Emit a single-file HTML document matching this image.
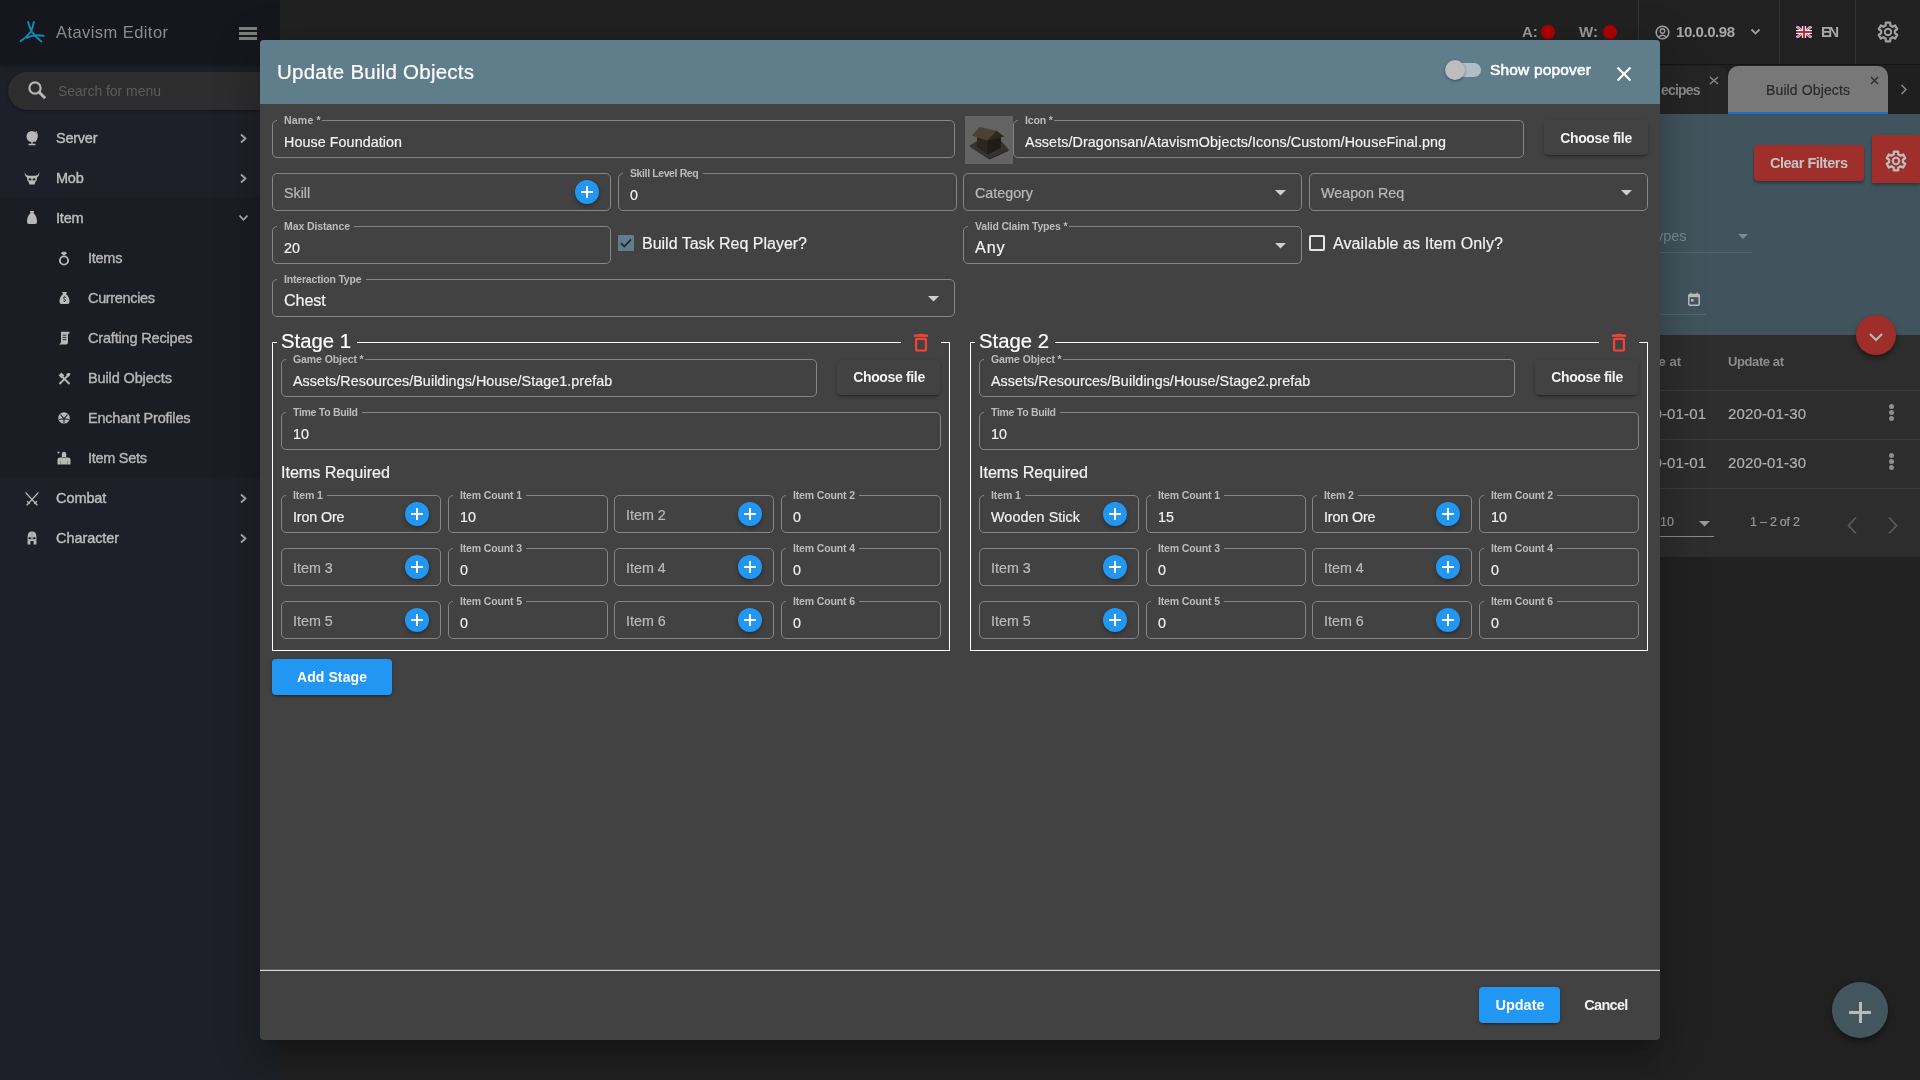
<!DOCTYPE html><html><head><meta charset="utf-8"><title>Update Build Objects</title><style>*{margin:0;padding:0}html,body{width:1920px;height:1080px;overflow:hidden;background:#1c1c1c}
.a{position:absolute;display:block}.t{position:absolute;white-space:nowrap;line-height:1;font-family:"Liberation Sans",sans-serif;will-change:transform}</style></head><body>
<div class="a" style="left:0px;top:0px;width:280px;height:1080px;background:#1e2029"></div>
<div class="a" style="left:0px;top:198px;width:280px;height:280px;background:#1b1d24"></div>
<div class="a" style="left:0px;top:0px;width:280px;height:64px;background:#16171c;box-shadow:0 2px 5px rgba(0,0,0,.3)"></div>
<svg class="a" style="left:18px;top:18px;" width="30" height="28" viewBox="0 0 30 28"><g fill="none" stroke="#0d8bbd" stroke-width="1.9" stroke-linecap="round"><path d="M10.1 4 Q12 11 14 14 Q18 19.5 23.4 23.4"/><path d="M15.9 4 Q14.5 10 13 13.5 Q8 20 2.6 23.1"/><path d="M8.5 19.8 Q16 16.2 25.6 17.8"/></g></svg>
<div class="t" style="top:24.03px;font-size:16.5px;color:#8c8c8c;font-weight:400;letter-spacing:0.433px;left:56.0px;">Atavism Editor</div>
<div class="a" style="left:238.7px;top:27.2px;width:18.5px;height:2.5px;background:#7f7f7f"></div>
<div class="a" style="left:238.7px;top:32.2px;width:18.5px;height:2.5px;background:#7f7f7f"></div>
<div class="a" style="left:238.7px;top:37.4px;width:18.5px;height:2.5px;background:#7f7f7f"></div>
<div class="a" style="left:8px;top:72px;width:290px;height:38px;background:#2d2d2d;border-radius:19px;box-shadow:0 1px 3px rgba(0,0,0,.35)"></div>
<svg class="a" style="left:27px;top:80px;" width="20" height="20" viewBox="0 0 20 20"><circle cx="8" cy="8" r="5.6" fill="none" stroke="#b5b5b5" stroke-width="2.2"/><path d="M12 12 L18.2 18.2" stroke="#b8b8b8" stroke-width="3"/></svg>
<div class="t" style="top:83.95px;font-size:14px;color:#5c5c5c;font-weight:400;letter-spacing:-0.036px;left:58.0px;">Search for menu</div>
<div class="t" style="top:130.53px;font-size:14.5px;color:#bdbdbd;font-weight:400;letter-spacing:-0.244px;left:56.0px;-webkit-text-stroke:0.4px #bdbdbd;">Server</div>
<svg class="a" style="left:239px;top:133px;" width="9" height="11" viewBox="0 0 9 11"><path d="M2 1.5 L6.5 5.5 L2 9.5" fill="none" stroke="#b0b0b0" stroke-width="1.8"/></svg>
<div class="t" style="top:170.53px;font-size:14.5px;color:#bdbdbd;font-weight:400;letter-spacing:-0.209px;left:56.0px;-webkit-text-stroke:0.4px #bdbdbd;">Mob</div>
<svg class="a" style="left:239px;top:173px;" width="9" height="11" viewBox="0 0 9 11"><path d="M2 1.5 L6.5 5.5 L2 9.5" fill="none" stroke="#b0b0b0" stroke-width="1.8"/></svg>
<div class="t" style="top:210.53px;font-size:14.5px;color:#bdbdbd;font-weight:400;letter-spacing:-0.168px;left:56.0px;-webkit-text-stroke:0.4px #bdbdbd;">Item</div>
<svg class="a" style="left:238px;top:214px;" width="11" height="8" viewBox="0 0 11 8"><path d="M1.5 1.5 L5.5 5.8 L9.5 1.5" fill="none" stroke="#b0b0b0" stroke-width="1.8"/></svg>
<div class="t" style="top:490.53px;font-size:14.5px;color:#bdbdbd;font-weight:400;letter-spacing:-0.076px;left:56.0px;-webkit-text-stroke:0.4px #bdbdbd;">Combat</div>
<svg class="a" style="left:239px;top:493px;" width="9" height="11" viewBox="0 0 9 11"><path d="M2 1.5 L6.5 5.5 L2 9.5" fill="none" stroke="#b0b0b0" stroke-width="1.8"/></svg>
<div class="t" style="top:530.53px;font-size:14.5px;color:#bdbdbd;font-weight:400;letter-spacing:-0.071px;left:56.0px;-webkit-text-stroke:0.4px #bdbdbd;">Character</div>
<svg class="a" style="left:239px;top:533px;" width="9" height="11" viewBox="0 0 9 11"><path d="M2 1.5 L6.5 5.5 L2 9.5" fill="none" stroke="#b0b0b0" stroke-width="1.8"/></svg>
<div class="t" style="top:250.53px;font-size:14.5px;color:#b5b5b5;font-weight:400;letter-spacing:-0.263px;left:88.0px;-webkit-text-stroke:0.4px #b5b5b5;">Items</div>
<div class="t" style="top:290.53px;font-size:14.5px;color:#b5b5b5;font-weight:400;letter-spacing:-0.345px;left:88.0px;-webkit-text-stroke:0.4px #b5b5b5;">Currencies</div>
<div class="t" style="top:330.53px;font-size:14.5px;color:#b5b5b5;font-weight:400;letter-spacing:-0.173px;left:88.0px;-webkit-text-stroke:0.4px #b5b5b5;">Crafting Recipes</div>
<div class="t" style="top:370.53px;font-size:14.5px;color:#b5b5b5;font-weight:400;letter-spacing:-0.128px;left:88.0px;-webkit-text-stroke:0.4px #b5b5b5;">Build Objects</div>
<div class="t" style="top:410.53px;font-size:14.5px;color:#b5b5b5;font-weight:400;letter-spacing:-0.206px;left:88.0px;-webkit-text-stroke:0.4px #b5b5b5;">Enchant Profiles</div>
<div class="t" style="top:450.53px;font-size:14.5px;color:#b5b5b5;font-weight:400;letter-spacing:-0.281px;left:88.0px;-webkit-text-stroke:0.4px #b5b5b5;">Item Sets</div>
<svg class="a" style="left:25px;top:130px;" width="14" height="16" viewBox="0 0 14 16"><circle cx="7" cy="6.5" r="5.5" fill="#b8b8b8"/><path d="M7 12 V14 M3.5 14.5 H10.5" stroke="#b8b8b8" stroke-width="1.3"/><path d="M11 1 Q14 6 10 12" fill="none" stroke="#b8b8b8" stroke-width="1"/></svg>
<svg class="a" style="left:24px;top:171px;" width="16" height="14" viewBox="0 0 16 14"><path d="M0.8 0.5 Q1.2 4.2 4.5 4.8 L11.5 4.8 Q14.8 4.2 15.2 0.5 Q15.6 5.2 13 6.4 Q13.4 9.6 11.2 11.2 L10.6 13.4 H5.4 L4.8 11.2 Q2.6 9.6 3 6.4 Q0.4 5.2 0.8 0.5Z" fill="#b8b8b8"/><ellipse cx="6" cy="8.4" rx="1.5" ry="1.1" fill="#1e2029"/><ellipse cx="10" cy="8.4" rx="1.5" ry="1.1" fill="#1e2029"/></svg>
<svg class="a" style="left:26px;top:210px;" width="12" height="15" viewBox="0 0 12 15"><path d="M4 1 H8 L7.5 3 Q11 6 11 12 Q11 14 9 14 H3 Q1 14 1 12 Q1 6 4.5 3Z" fill="#b8b8b8"/></svg>
<svg class="a" style="left:24px;top:490px;" width="16" height="17" viewBox="0 0 16 17"><path d="M2 15 L14.5 1.5 L14.2 3.8 L3.2 15.8Z" fill="#b8b8b8"/><path d="M14 15 L1.5 1.5 L1.8 3.8 L12.8 15.8Z" fill="#b8b8b8"/><path d="M3.2 11.2 L5.6 13.8 M12.8 11.2 L10.4 13.8" stroke="#b8b8b8" stroke-width="1.3"/></svg>
<svg class="a" style="left:27px;top:531px;" width="10" height="14" viewBox="0 0 10 14"><path d="M0.6 13.6 V6 Q0.6 0.6 5 0.6 Q9.4 0.6 9.4 6 V13.6 H6.6 V10 H3.4 V13.6Z" fill="#b8b8b8"/><rect x="1.6" y="6.3" width="2.6" height="1.9" fill="#1e2029"/><rect x="5.8" y="6.3" width="2.6" height="1.9" fill="#1e2029"/><rect x="4.6" y="1.5" width="0.8" height="7" fill="#8a8a8a"/></svg>
<svg class="a" style="left:58px;top:251px;" width="12" height="15" viewBox="0 0 12 15"><path d="M4.2 0.8 H7.8 L9 2.4 L6 4.6 L3 2.4Z" fill="#b8b8b8"/><circle cx="6" cy="9.5" r="4.1" fill="none" stroke="#b8b8b8" stroke-width="1.9"/></svg>
<svg class="a" style="left:58.5px;top:291px;" width="11" height="14" viewBox="0 0 11 14"><path d="M3 1 H8 L7 3.2 Q10.5 5.5 10.5 11 Q10.5 13 8.5 13 H2.5 Q0.5 13 0.5 11 Q0.5 5.5 4 3.2Z" fill="#b8b8b8"/><path d="M6.6 6.6 Q5.4 5.8 4.6 6.6 Q4.2 7.6 5.6 8.2 Q7 8.8 6.4 9.8 Q5.6 10.6 4.4 9.8 M5.5 5.4 V6.2 M5.5 10.2 V11" fill="none" stroke="#1b1d24" stroke-width="0.9"/></svg>
<svg class="a" style="left:57.5px;top:331px;" width="12" height="14" viewBox="0 0 12 14"><path d="M3 0.8 H11.4 V2.8 H10 V11.6 Q10 13.4 8.2 13.4 H0.8 Q2.6 12.6 3 11.2Z" fill="#b8b8b8"/><path d="M4.6 4.2 H8.4 M4.6 6.4 H8.4 M4.6 8.6 H8.4" stroke="#1b1d24" stroke-width="0.9"/></svg>
<svg class="a" style="left:57.5px;top:372px;" width="13" height="13" viewBox="0 0 13 13"><path d="M1.5 12 L9.5 3.8 M11.5 12 L4.5 5" stroke="#b8b8b8" stroke-width="1.8"/><path d="M0.6 3.4 L3.4 0.6 L6.4 3.6 L3.6 6.4Z" fill="#b8b8b8"/><path d="M8.2 2.2 Q10.4 0.2 12.6 1.6 Q11.8 4.6 9.6 5.6Z" fill="#b8b8b8"/></svg>
<svg class="a" style="left:58px;top:412px;" width="12" height="12" viewBox="0 0 12 12"><circle cx="6" cy="6" r="5.8" fill="#b8b8b8"/><path d="M2.5 2.5 L6 6.8 L9.5 2.5 M6 6.8 V11.5 M1.2 7.5 L6 6.8 L10.8 7.5" fill="none" stroke="#1b1d24" stroke-width="1.1"/></svg>
<svg class="a" style="left:56px;top:450px;" width="15" height="15" viewBox="0 0 15 15"><circle cx="2.5" cy="2.5" r="1.1" fill="#b8b8b8"/><path d="M5.8 7 V4.2 Q5.8 1.8 8 1.8 Q10.2 1.8 10.2 4.2 V7Z" fill="#b8b8b8"/><path d="M1.5 14.5 V9.5 Q1.5 7.5 4 7.5 H12 Q14.5 7.5 14.5 9.5 V14.5 H11.5 V11 H4.5 V14.5Z" fill="#b8b8b8"/><path d="M4.5 11 V14.5 H11.5 V11Z" fill="#b8b8b8"/></svg>
<div class="a" style="left:280px;top:0px;width:1640px;height:64px;background:#212121"></div>
<div class="a" style="left:280px;top:64px;width:1640px;height:1px;background:#141414"></div>
<div class="a" style="left:1638px;top:0px;width:1px;height:64px;background:#333"></div>
<div class="a" style="left:1779px;top:0px;width:1px;height:64px;background:#333"></div>
<div class="a" style="left:1855px;top:0px;width:1px;height:64px;background:#333"></div>
<div class="t" style="top:24.10px;font-size:15px;color:#9a9a9a;font-weight:700;left:1522.0px;">A:</div>
<div class="a" style="left:1541px;top:25px;width:14px;height:14px;background:#b00000;border-radius:50%"></div>
<div class="t" style="top:24.10px;font-size:15px;color:#9a9a9a;font-weight:700;left:1579.0px;">W:</div>
<div class="a" style="left:1603px;top:25px;width:14px;height:14px;background:#b00000;border-radius:50%"></div>
<svg class="a" style="left:1655px;top:25px;" width="15" height="15" viewBox="0 0 15 15"><circle cx="7.5" cy="7.5" r="6.3" fill="none" stroke="#a0a0a0" stroke-width="1.6"/><circle cx="7.5" cy="6" r="2.2" fill="none" stroke="#a0a0a0" stroke-width="1.4"/><path d="M3.5 12 Q7.5 8.5 11.5 12" fill="none" stroke="#a0a0a0" stroke-width="1.4"/></svg>
<div class="t" style="top:24.10px;font-size:15px;color:#a8a8a8;font-weight:700;letter-spacing:-0.445px;left:1676.0px;">10.0.0.98</div>
<svg class="a" style="left:1750px;top:28px;" width="11" height="8" viewBox="0 0 11 8"><path d="M1.5 1.5 L5.5 5.5 L9.5 1.5" fill="none" stroke="#a0a0a0" stroke-width="1.8"/></svg>
<svg class="a" style="left:1796px;top:26px;" width="16" height="12" viewBox="0 0 16 12"><rect width="16" height="12" fill="#1a237e"/><path d="M0 0 L16 12 M16 0 L0 12" stroke="#fff" stroke-width="2.4"/><path d="M0 0 L16 12 M16 0 L0 12" stroke="#c62828" stroke-width="1"/><path d="M8 0 V12 M0 6 H16" stroke="#fff" stroke-width="4"/><path d="M8 0 V12 M0 6 H16" stroke="#c62828" stroke-width="2.2"/></svg>
<div class="t" style="top:24.10px;font-size:15px;color:#a8a8a8;font-weight:700;letter-spacing:-2.844px;left:1821.0px;">EN</div>
<svg class="a" style="left:1876px;top:19.5px;" width="24" height="24" viewBox="0 0 24 24"><path d="M8.50 5.94 L9.72 5.38 L9.84 2.65 L14.16 2.65 L14.28 5.38 L15.50 5.94 L16.59 6.72 L19.02 5.45 L21.18 9.19 L18.87 10.66 L19.00 12.00 L18.87 13.34 L21.18 14.81 L19.02 18.55 L16.59 17.28 L15.50 18.06 L14.28 18.62 L14.16 21.35 L9.84 21.35 L9.72 18.62 L8.50 18.06 L7.41 17.28 L4.98 18.55 L2.82 14.81 L5.13 13.34 L5.00 12.00 L5.13 10.66 L2.82 9.19 L4.98 5.45 L7.41 6.72Z" fill="none" stroke="#a0a0a0" stroke-width="2.3" stroke-linejoin="round"/><circle cx="12" cy="12" r="3.2" fill="none" stroke="#a0a0a0" stroke-width="2"/></svg>
<div class="a" style="left:280px;top:65px;width:1640px;height:49px;background:#1f1f1f"></div>
<div class="a" style="left:1600px;top:66px;width:128px;height:48px;background:#252525;border-top-right-radius:10px"></div>
<div class="t" style="top:82.85px;font-size:14px;color:#8a8a8a;font-weight:700;letter-spacing:-0.819px;left:1661.0px;">ecipes</div>
<svg class="a" style="left:1709px;top:76px;" width="10" height="9" viewBox="0 0 10 9"><path d="M1 1 L9 8 M9 1 L1 8" stroke="#8a8a8a" stroke-width="1.4"/></svg>
<div class="a" style="left:1728px;top:66px;width:160px;height:48px;background:#787878;border-radius:10px 10px 0 0"></div>
<div class="a" style="left:1728px;top:112px;width:160px;height:2px;background:#1a6fc6"></div>
<div class="t" style="top:82.85px;font-size:14px;color:#2a2a2a;font-weight:400;letter-spacing:0.126px;left:1766.0px;-webkit-text-stroke:0.2px #2a2a2a;">Build Objects</div>
<svg class="a" style="left:1870px;top:76px;" width="9" height="9" viewBox="0 0 9 9"><path d="M1 1 L8 8 M8 1 L1 8" stroke="#2a2a2a" stroke-width="1.3"/></svg>
<svg class="a" style="left:1900px;top:84px;" width="8" height="11" viewBox="0 0 8 11"><path d="M1.5 1 L6 5.5 L1.5 10" fill="none" stroke="#8a8a8a" stroke-width="1.5"/></svg>
<div class="a" style="left:1660px;top:114px;width:260px;height:221px;background:#41535c"></div>
<div class="a" style="left:1754px;top:145px;width:110px;height:36px;background:#9f2f2a;border-radius:4px;box-shadow:0 2px 3px rgba(0,0,0,.35)"></div>
<div class="t" style="top:156.33px;font-size:14.5px;color:#c4c4c4;font-weight:700;letter-spacing:-0.486px;left:1770.0px;">Clear Filters</div>
<div class="a" style="left:1872px;top:135px;width:48px;height:48px;background:#9f2f2a;box-shadow:0 2px 3px rgba(0,0,0,.35)"></div>
<svg class="a" style="left:1884px;top:149.3px;" width="24" height="24" viewBox="0 0 24 24"><path d="M8.50 5.94 L9.72 5.38 L9.84 2.65 L14.16 2.65 L14.28 5.38 L15.50 5.94 L16.59 6.72 L19.02 5.45 L21.18 9.19 L18.87 10.66 L19.00 12.00 L18.87 13.34 L21.18 14.81 L19.02 18.55 L16.59 17.28 L15.50 18.06 L14.28 18.62 L14.16 21.35 L9.84 21.35 L9.72 18.62 L8.50 18.06 L7.41 17.28 L4.98 18.55 L2.82 14.81 L5.13 13.34 L5.00 12.00 L5.13 10.66 L2.82 9.19 L4.98 5.45 L7.41 6.72Z" fill="none" stroke="#bdbdbd" stroke-width="2.3" stroke-linejoin="round"/><circle cx="12" cy="12" r="3.2" fill="none" stroke="#bdbdbd" stroke-width="2"/></svg>
<div class="t" style="top:228.73px;font-size:14.5px;color:#7c8a91;font-weight:400;right:233.5px;">Claim Types</div>
<svg class="a" style="left:1738px;top:234px;" width="10" height="5" viewBox="0 0 10 5"><path d="M0 0 H10 L5 5Z" fill="#7c8a91"/></svg>
<div class="a" style="left:1660px;top:252px;width:92px;height:1px;background:#56666e"></div>
<svg class="a" style="left:1688px;top:292px;" width="12" height="14" viewBox="0 0 12 14"><rect x="0.8" y="2.6" width="10.4" height="10.6" rx="1" fill="none" stroke="#bdbdbd" stroke-width="1.5"/><rect x="0.8" y="2.6" width="10.4" height="2.6" fill="#bdbdbd"/><path d="M3 0.6V3 M9 0.6V3" stroke="#bdbdbd" stroke-width="1.2"/><rect x="3" y="7" width="2.6" height="2.6" fill="#bdbdbd"/></svg>
<div class="a" style="left:1660px;top:314px;width:46px;height:1px;background:#56666e"></div>
<div class="a" style="left:1660px;top:335px;width:260px;height:222px;background:#2d2d2d"></div>
<div class="t" style="top:355.00px;font-size:13px;color:#8d8d8d;font-weight:700;right:239.5px;">ate at</div>
<div class="t" style="top:355.00px;font-size:13px;color:#8d8d8d;font-weight:700;letter-spacing:-0.404px;left:1728.0px;">Update at</div>
<div class="a" style="left:1660px;top:390px;width:260px;height:1px;background:#3b3b3b"></div>
<div class="a" style="left:1660px;top:439px;width:260px;height:1px;background:#3b3b3b"></div>
<div class="a" style="left:1660px;top:488px;width:260px;height:1px;background:#3b3b3b"></div>
<div class="t" style="top:405.90px;font-size:15px;color:#b0b0b0;font-weight:400;letter-spacing:0.141px;right:214.0px;-webkit-text-stroke:0.2px #b0b0b0;">2020-01-01</div>
<div class="t" style="top:405.90px;font-size:15px;color:#b0b0b0;font-weight:400;letter-spacing:0.141px;left:1728.0px;-webkit-text-stroke:0.2px #b0b0b0;">2020-01-30</div>
<div class="a" style="left:1889.4px;top:404.0px;width:5px;height:5px;background:#8e8e8e;border-radius:50%"></div>
<div class="a" style="left:1889.4px;top:410.0px;width:5px;height:5px;background:#8e8e8e;border-radius:50%"></div>
<div class="a" style="left:1889.4px;top:416.0px;width:5px;height:5px;background:#8e8e8e;border-radius:50%"></div>
<div class="t" style="top:454.80px;font-size:15px;color:#b0b0b0;font-weight:400;letter-spacing:0.141px;right:214.0px;-webkit-text-stroke:0.2px #b0b0b0;">2020-01-01</div>
<div class="t" style="top:454.80px;font-size:15px;color:#b0b0b0;font-weight:400;letter-spacing:0.141px;left:1728.0px;-webkit-text-stroke:0.2px #b0b0b0;">2020-01-30</div>
<div class="a" style="left:1889.4px;top:452.9px;width:5px;height:5px;background:#8e8e8e;border-radius:50%"></div>
<div class="a" style="left:1889.4px;top:458.9px;width:5px;height:5px;background:#8e8e8e;border-radius:50%"></div>
<div class="a" style="left:1889.4px;top:464.9px;width:5px;height:5px;background:#8e8e8e;border-radius:50%"></div>
<div class="t" style="top:516.42px;font-size:12.5px;color:#9a9a9a;font-weight:400;left:1660.0px;-webkit-text-stroke:0.2px #9a9a9a;">10</div>
<svg class="a" style="left:1699px;top:521px;" width="12" height="7" viewBox="0 0 12 7"><path d="M0 0 H11 L5.5 5.5Z" fill="#9a9a9a"/></svg>
<div class="a" style="left:1660px;top:536px;width:54px;height:1px;background:#8a8a8a"></div>
<div class="t" style="top:516.42px;font-size:12.5px;color:#9a9a9a;font-weight:400;letter-spacing:-0.236px;left:1750.0px;-webkit-text-stroke:0.2px #9a9a9a;">1 – 2 of 2</div>
<svg class="a" style="left:1846px;top:515.5px;" width="12" height="19" viewBox="0 0 12 19"><path d="M10 1.5 L2.5 9.5 L10 17.5" fill="none" stroke="#5a5a5a" stroke-width="1.8"/></svg>
<svg class="a" style="left:1887px;top:515.5px;" width="12" height="19" viewBox="0 0 12 19"><path d="M2 1.5 L9.5 9.5 L2 17.5" fill="none" stroke="#5a5a5a" stroke-width="1.8"/></svg>
<div class="a" style="left:1660px;top:557px;width:260px;height:523px;background:#212121"></div>
<div class="a" style="left:280px;top:64px;width:1380px;height:1016px;background:#212121"></div>
<div class="a" style="left:1856px;top:315px;width:40px;height:40px;background:#9d2e29;border-radius:50%;box-shadow:0 3px 5px rgba(0,0,0,.4)"></div>
<svg class="a" style="left:1868px;top:331.5px;" width="16" height="10" viewBox="0 0 16 10"><path d="M2 2 L8 8 L14 2" fill="none" stroke="#b8b8b8" stroke-width="2.2"/></svg>
<div class="a" style="left:1832px;top:982px;width:56px;height:56px;background:#43555d;border-radius:50%;box-shadow:0 3px 6px rgba(0,0,0,.45)"></div>
<div class="a" style="left:1849px;top:1011px;width:22px;height:3px;background:#bababa"></div>
<div class="a" style="left:1858.5px;top:1001.5px;width:3px;height:21.5px;background:#bababa"></div>
<div class="a" style="left:260px;top:40px;width:1400px;height:1000px;background:#424242;border-radius:4px;box-shadow:0 11px 15px -7px rgba(0,0,0,.2),0 24px 38px 3px rgba(0,0,0,.14),0 9px 46px 8px rgba(0,0,0,.12)"></div>
<div class="a" style="left:260px;top:40px;width:1400px;height:64px;background:#607d8b;border-radius:4px 4px 0 0"></div>
<div class="t" style="top:62.25px;font-size:20.5px;color:#ffffff;font-weight:400;letter-spacing:0.233px;left:276.5px;-webkit-text-stroke:0.2px #ffffff;">Update Build Objects</div>
<div class="a" style="left:1446px;top:63px;width:35px;height:14px;background:#b0bec5;border-radius:7px"></div>
<div class="a" style="left:1445px;top:60px;width:20px;height:20px;background:#bdbdbd;border-radius:50%;box-shadow:0 1px 3px rgba(0,0,0,.4)"></div>
<div class="t" style="top:61.88px;font-size:15.5px;color:#ffffff;font-weight:400;letter-spacing:0.173px;left:1490.0px;-webkit-text-stroke:0.55px #ffffff;">Show popover</div>
<svg class="a" style="left:1616px;top:66px;" width="16" height="16" viewBox="0 0 16 16"><path d="M1.5 1.5 L14.5 14.5 M14.5 1.5 L1.5 14.5" stroke="#fff" stroke-width="2.2"/></svg>
<div class="a" style="left:272px;top:120px;width:683px;height:38px;border:1px solid #858585;border-radius:5px;box-sizing:border-box"></div>
<div class="a" style="left:277px;top:118px;width:45.2px;height:4px;background:#424242"></div>
<div class="t" style="top:115.41px;font-size:10.5px;color:#bcbcbc;font-weight:700;letter-spacing:0.218px;left:284.0px;">Name *</div>
<div class="t" style="top:134.70px;font-size:14.3px;color:#f2f2f2;font-weight:400;letter-spacing:0.077px;left:284.0px;-webkit-text-stroke:0.2px #f2f2f2;">House Foundation</div>
<div class="a" style="left:965px;top:116px;width:48px;height:48px;background:#636363"></div>
<svg class="a" style="left:965px;top:116px;" width="48" height="48" viewBox="0 0 48 48"><polygon points="4.5,29.8 11,25.5 35,24 44,33.5 24.5,42.2" fill="#34332c"/><polygon points="4.5,29.8 24.5,42.2 24.5,43.5 6,31.5" fill="#24231f"/><polygon points="24.5,42.2 44,33.5 43,35 24.5,43.5" fill="#1e1d1a"/><polygon points="12,18 22.5,23 36,18 36,31.5 22.5,38.5 12,31" fill="#2a2520"/><polygon points="22.5,23 36,18 36,31.5 22.5,38.5" fill="#1f1b17"/><polygon points="7,19.8 14.3,11 31.5,14.8 39,20.6 22.3,24.5" fill="#4a4235"/><polygon points="22.3,24.5 39,20.6 31.5,14.8" fill="#2d2820"/></svg>
<div class="a" style="left:1013px;top:120px;width:511px;height:38px;border:1px solid #858585;border-radius:5px;box-sizing:border-box"></div>
<div class="a" style="left:1018px;top:118px;width:36.3px;height:4px;background:#424242"></div>
<div class="t" style="top:115.41px;font-size:10.5px;color:#bcbcbc;font-weight:700;letter-spacing:-0.159px;left:1025.0px;">Icon *</div>
<div class="t" style="top:134.70px;font-size:14.3px;color:#f2f2f2;font-weight:400;letter-spacing:0.093px;left:1025.0px;-webkit-text-stroke:0.2px #f2f2f2;">Assets/Dragonsan/AtavismObjects/Icons/Custom/HouseFinal.png</div>
<div class="a" style="left:1544px;top:120px;width:104px;height:35px;background:#424242;border-radius:4px;box-shadow:0 3px 1px -2px rgba(0,0,0,.2),0 2px 2px 0 rgba(0,0,0,.14),0 1px 5px 0 rgba(0,0,0,.12)"></div>
<div class="t" style="top:130.65px;font-size:14px;color:#f2f2f2;font-weight:700;letter-spacing:-0.347px;left:1596.0px;transform:translateX(-50%);">Choose file</div>
<div class="a" style="left:272px;top:173px;width:339px;height:38px;border:1px solid #858585;border-radius:5px;box-sizing:border-box"></div>
<div class="t" style="top:186.20px;font-size:14.3px;color:#bababa;font-weight:400;left:284.0px;-webkit-text-stroke:0.2px #bababa;">Skill</div>
<div class="a" style="left:575px;top:180px;width:24px;height:24px;background:#2196f3;border-radius:50%;box-shadow:0 2px 4px rgba(0,0,0,.35)"></div>
<div class="a" style="left:581px;top:191px;width:12px;height:2.2px;background:#fff"></div>
<div class="a" style="left:585.9px;top:186px;width:2.2px;height:12px;background:#fff"></div>
<div class="a" style="left:618px;top:173px;width:339px;height:38px;border:1px solid #858585;border-radius:5px;box-sizing:border-box"></div>
<div class="a" style="left:623px;top:171px;width:79.7px;height:4px;background:#424242"></div>
<div class="t" style="top:168.41px;font-size:10.5px;color:#bcbcbc;font-weight:700;letter-spacing:-0.387px;left:630.0px;">Skill Level Req</div>
<div class="t" style="top:187.70px;font-size:14.3px;color:#f2f2f2;font-weight:400;left:630.0px;-webkit-text-stroke:0.2px #f2f2f2;">0</div>
<div class="a" style="left:963px;top:173px;width:339px;height:38px;border:1px solid #858585;border-radius:5px;box-sizing:border-box"></div>
<div class="t" style="top:186.20px;font-size:14.3px;color:#bababa;font-weight:400;left:975.0px;-webkit-text-stroke:0.2px #bababa;">Category</div>
<svg class="a" style="left:1275px;top:190px;" width="12" height="6" viewBox="0 0 12 6"><path d="M0 0 H11 L5.5 5.5Z" fill="#cfcfcf"/></svg>
<div class="a" style="left:1309px;top:173px;width:339px;height:38px;border:1px solid #858585;border-radius:5px;box-sizing:border-box"></div>
<div class="t" style="top:186.20px;font-size:14.3px;color:#bababa;font-weight:400;left:1321.0px;-webkit-text-stroke:0.2px #bababa;">Weapon Req</div>
<svg class="a" style="left:1621px;top:190px;" width="12" height="6" viewBox="0 0 12 6"><path d="M0 0 H11 L5.5 5.5Z" fill="#cfcfcf"/></svg>
<div class="a" style="left:272px;top:226px;width:339px;height:38px;border:1px solid #858585;border-radius:5px;box-sizing:border-box"></div>
<div class="a" style="left:277px;top:224px;width:77px;height:4px;background:#424242"></div>
<div class="t" style="top:221.41px;font-size:10.5px;color:#bcbcbc;font-weight:700;letter-spacing:-0.102px;left:284.0px;">Max Distance</div>
<div class="t" style="top:240.70px;font-size:14.3px;color:#f2f2f2;font-weight:400;left:284.0px;-webkit-text-stroke:0.2px #f2f2f2;">20</div>
<div class="a" style="left:618px;top:235px;width:16px;height:16px;background:#607d8b;border-radius:1px"></div>
<svg class="a" style="left:618px;top:235px;" width="16" height="16" viewBox="0 0 16 16"><path d="M3 8.2 L6.3 11.5 L13 4.5" fill="none" stroke="#222" stroke-width="1.7"/></svg>
<div class="t" style="top:235.66px;font-size:16px;color:#f2f2f2;font-weight:400;letter-spacing:-0.006px;left:642.0px;-webkit-text-stroke:0.2px #f2f2f2;">Build Task Req Player?</div>
<div class="a" style="left:963px;top:226px;width:339px;height:38px;border:1px solid #858585;border-radius:5px;box-sizing:border-box"></div>
<div class="a" style="left:968px;top:224px;width:101.0px;height:4px;background:#424242"></div>
<div class="t" style="top:221.41px;font-size:10.5px;color:#bcbcbc;font-weight:700;letter-spacing:-0.168px;left:975.0px;">Valid Claim Types *</div>
<div class="t" style="top:239.29px;font-size:16.2px;color:#f2f2f2;font-weight:400;letter-spacing:0.847px;left:975.0px;-webkit-text-stroke:0.2px #f2f2f2;">Any</div>
<svg class="a" style="left:1275px;top:243px;" width="12" height="6" viewBox="0 0 12 6"><path d="M0 0 H11 L5.5 5.5Z" fill="#cfcfcf"/></svg>
<div class="a" style="left:1309px;top:235px;width:16px;height:16px;border:2px solid #e6e6e6;border-radius:2px;box-sizing:border-box"></div>
<div class="t" style="top:235.66px;font-size:16px;color:#f2f2f2;font-weight:400;letter-spacing:0.100px;left:1333.0px;-webkit-text-stroke:0.2px #f2f2f2;">Available as Item Only?</div>
<div class="a" style="left:272px;top:279px;width:683px;height:38px;border:1px solid #858585;border-radius:5px;box-sizing:border-box"></div>
<div class="a" style="left:277px;top:277px;width:88.6px;height:4px;background:#424242"></div>
<div class="t" style="top:274.41px;font-size:10.5px;color:#bcbcbc;font-weight:700;letter-spacing:-0.182px;left:284.0px;">Interaction Type</div>
<div class="t" style="top:292.29px;font-size:16.2px;color:#f2f2f2;font-weight:400;letter-spacing:-0.149px;left:284.0px;-webkit-text-stroke:0.2px #f2f2f2;">Chest</div>
<svg class="a" style="left:928px;top:296px;" width="12" height="6" viewBox="0 0 12 6"><path d="M0 0 H11 L5.5 5.5Z" fill="#cfcfcf"/></svg>
<div class="a" style="left:272px;top:342px;width:678px;height:309px;border:1.5px solid #ffffff;box-sizing:border-box"></div>
<div class="a" style="left:277px;top:336px;width:80px;height:12px;background:#424242"></div>
<div class="t" style="top:331.12px;font-size:20.3px;color:#ffffff;font-weight:400;letter-spacing:0.013px;left:281.0px;-webkit-text-stroke:0.2px #ffffff;">Stage 1</div>
<div class="a" style="left:901px;top:336px;width:40px;height:12px;background:#424242"></div>
<svg class="a" style="left:913px;top:332px;" width="16" height="20" viewBox="0 0 16 20"><rect x="0.9" y="2.5" width="14.2" height="2.4" fill="#f44336"/><path d="M4.5 2.8 Q8 1.4 11.5 2.8Z" fill="#f44336" stroke="#f44336" stroke-width="0.8"/><rect x="3.1" y="6.9" width="9.8" height="11.6" rx="0.8" fill="none" stroke="#f44336" stroke-width="2.2"/></svg>
<div class="a" style="left:281px;top:359px;width:536px;height:38px;border:1px solid #858585;border-radius:5px;box-sizing:border-box"></div>
<div class="a" style="left:286px;top:357px;width:79.2px;height:4px;background:#424242"></div>
<div class="t" style="top:354.41px;font-size:10.5px;color:#bcbcbc;font-weight:700;letter-spacing:-0.090px;left:293.0px;">Game Object *</div>
<div class="t" style="top:373.70px;font-size:14.3px;color:#f2f2f2;font-weight:400;letter-spacing:0.064px;left:293.0px;-webkit-text-stroke:0.2px #f2f2f2;">Assets/Resources/Buildings/House/Stage1.prefab</div>
<div class="a" style="left:837px;top:360px;width:103px;height:35px;background:#424242;border-radius:4px;box-shadow:0 3px 1px -2px rgba(0,0,0,.2),0 2px 2px 0 rgba(0,0,0,.14),0 1px 5px 0 rgba(0,0,0,.12)"></div>
<div class="t" style="top:369.65px;font-size:14px;color:#f2f2f2;font-weight:700;letter-spacing:-0.347px;left:888.5px;transform:translateX(-50%);">Choose file</div>
<div class="a" style="left:281px;top:412px;width:660px;height:38px;border:1px solid #858585;border-radius:5px;box-sizing:border-box"></div>
<div class="a" style="left:286px;top:410px;width:76px;height:4px;background:#424242"></div>
<div class="t" style="top:407.41px;font-size:10.5px;color:#bcbcbc;font-weight:700;letter-spacing:-0.288px;left:293.0px;">Time To Build</div>
<div class="t" style="top:426.70px;font-size:14.3px;color:#f2f2f2;font-weight:400;left:293.0px;-webkit-text-stroke:0.2px #f2f2f2;">10</div>
<div class="t" style="top:464.39px;font-size:16.2px;color:#f2f2f2;font-weight:400;letter-spacing:-0.059px;left:281.0px;-webkit-text-stroke:0.2px #f2f2f2;">Items Required</div>
<div class="a" style="left:281px;top:495px;width:160px;height:38px;border:1px solid #858585;border-radius:5px;box-sizing:border-box"></div>
<div class="a" style="left:286px;top:493px;width:40.8px;height:4px;background:#424242"></div>
<div class="t" style="top:490.41px;font-size:10.5px;color:#bcbcbc;font-weight:700;letter-spacing:-0.112px;left:293.0px;">Item 1</div>
<div class="t" style="top:509.70px;font-size:14.3px;color:#f2f2f2;font-weight:400;letter-spacing:-0.136px;left:293.0px;-webkit-text-stroke:0.2px #f2f2f2;">Iron Ore</div>
<div class="a" style="left:405px;top:502px;width:24px;height:24px;background:#2196f3;border-radius:50%;box-shadow:0 2px 4px rgba(0,0,0,.35)"></div>
<div class="a" style="left:411px;top:513px;width:12px;height:2.2px;background:#fff"></div>
<div class="a" style="left:415.9px;top:508px;width:2.2px;height:12px;background:#fff"></div>
<div class="a" style="left:448px;top:495px;width:160px;height:38px;border:1px solid #858585;border-radius:5px;box-sizing:border-box"></div>
<div class="a" style="left:453px;top:493px;width:73px;height:4px;background:#424242"></div>
<div class="t" style="top:490.41px;font-size:10.5px;color:#bcbcbc;font-weight:700;letter-spacing:-0.145px;left:460.0px;">Item Count 1</div>
<div class="t" style="top:509.70px;font-size:14.3px;color:#f2f2f2;font-weight:400;left:460.0px;-webkit-text-stroke:0.2px #f2f2f2;">10</div>
<div class="a" style="left:614px;top:495px;width:160px;height:38px;border:1px solid #858585;border-radius:5px;box-sizing:border-box"></div>
<div class="t" style="top:508.20px;font-size:14.3px;color:#bababa;font-weight:400;left:626.0px;-webkit-text-stroke:0.2px #bababa;">Item 2</div>
<div class="a" style="left:738px;top:502px;width:24px;height:24px;background:#2196f3;border-radius:50%;box-shadow:0 2px 4px rgba(0,0,0,.35)"></div>
<div class="a" style="left:744px;top:513px;width:12px;height:2.2px;background:#fff"></div>
<div class="a" style="left:748.9px;top:508px;width:2.2px;height:12px;background:#fff"></div>
<div class="a" style="left:781px;top:495px;width:160px;height:38px;border:1px solid #858585;border-radius:5px;box-sizing:border-box"></div>
<div class="a" style="left:786px;top:493px;width:73px;height:4px;background:#424242"></div>
<div class="t" style="top:490.41px;font-size:10.5px;color:#bcbcbc;font-weight:700;letter-spacing:-0.145px;left:793.0px;">Item Count 2</div>
<div class="t" style="top:509.70px;font-size:14.3px;color:#f2f2f2;font-weight:400;left:793.0px;-webkit-text-stroke:0.2px #f2f2f2;">0</div>
<div class="a" style="left:281px;top:548px;width:160px;height:38px;border:1px solid #858585;border-radius:5px;box-sizing:border-box"></div>
<div class="t" style="top:561.20px;font-size:14.3px;color:#bababa;font-weight:400;left:293.0px;-webkit-text-stroke:0.2px #bababa;">Item 3</div>
<div class="a" style="left:405px;top:555px;width:24px;height:24px;background:#2196f3;border-radius:50%;box-shadow:0 2px 4px rgba(0,0,0,.35)"></div>
<div class="a" style="left:411px;top:566px;width:12px;height:2.2px;background:#fff"></div>
<div class="a" style="left:415.9px;top:561px;width:2.2px;height:12px;background:#fff"></div>
<div class="a" style="left:448px;top:548px;width:160px;height:38px;border:1px solid #858585;border-radius:5px;box-sizing:border-box"></div>
<div class="a" style="left:453px;top:546px;width:73px;height:4px;background:#424242"></div>
<div class="t" style="top:543.41px;font-size:10.5px;color:#bcbcbc;font-weight:700;letter-spacing:-0.145px;left:460.0px;">Item Count 3</div>
<div class="t" style="top:562.70px;font-size:14.3px;color:#f2f2f2;font-weight:400;left:460.0px;-webkit-text-stroke:0.2px #f2f2f2;">0</div>
<div class="a" style="left:614px;top:548px;width:160px;height:38px;border:1px solid #858585;border-radius:5px;box-sizing:border-box"></div>
<div class="t" style="top:561.20px;font-size:14.3px;color:#bababa;font-weight:400;left:626.0px;-webkit-text-stroke:0.2px #bababa;">Item 4</div>
<div class="a" style="left:738px;top:555px;width:24px;height:24px;background:#2196f3;border-radius:50%;box-shadow:0 2px 4px rgba(0,0,0,.35)"></div>
<div class="a" style="left:744px;top:566px;width:12px;height:2.2px;background:#fff"></div>
<div class="a" style="left:748.9px;top:561px;width:2.2px;height:12px;background:#fff"></div>
<div class="a" style="left:781px;top:548px;width:160px;height:38px;border:1px solid #858585;border-radius:5px;box-sizing:border-box"></div>
<div class="a" style="left:786px;top:546px;width:73px;height:4px;background:#424242"></div>
<div class="t" style="top:543.41px;font-size:10.5px;color:#bcbcbc;font-weight:700;letter-spacing:-0.145px;left:793.0px;">Item Count 4</div>
<div class="t" style="top:562.70px;font-size:14.3px;color:#f2f2f2;font-weight:400;left:793.0px;-webkit-text-stroke:0.2px #f2f2f2;">0</div>
<div class="a" style="left:281px;top:601px;width:160px;height:38px;border:1px solid #858585;border-radius:5px;box-sizing:border-box"></div>
<div class="t" style="top:614.20px;font-size:14.3px;color:#bababa;font-weight:400;left:293.0px;-webkit-text-stroke:0.2px #bababa;">Item 5</div>
<div class="a" style="left:405px;top:608px;width:24px;height:24px;background:#2196f3;border-radius:50%;box-shadow:0 2px 4px rgba(0,0,0,.35)"></div>
<div class="a" style="left:411px;top:619px;width:12px;height:2.2px;background:#fff"></div>
<div class="a" style="left:415.9px;top:614px;width:2.2px;height:12px;background:#fff"></div>
<div class="a" style="left:448px;top:601px;width:160px;height:38px;border:1px solid #858585;border-radius:5px;box-sizing:border-box"></div>
<div class="a" style="left:453px;top:599px;width:73px;height:4px;background:#424242"></div>
<div class="t" style="top:596.41px;font-size:10.5px;color:#bcbcbc;font-weight:700;letter-spacing:-0.145px;left:460.0px;">Item Count 5</div>
<div class="t" style="top:615.70px;font-size:14.3px;color:#f2f2f2;font-weight:400;left:460.0px;-webkit-text-stroke:0.2px #f2f2f2;">0</div>
<div class="a" style="left:614px;top:601px;width:160px;height:38px;border:1px solid #858585;border-radius:5px;box-sizing:border-box"></div>
<div class="t" style="top:614.20px;font-size:14.3px;color:#bababa;font-weight:400;left:626.0px;-webkit-text-stroke:0.2px #bababa;">Item 6</div>
<div class="a" style="left:738px;top:608px;width:24px;height:24px;background:#2196f3;border-radius:50%;box-shadow:0 2px 4px rgba(0,0,0,.35)"></div>
<div class="a" style="left:744px;top:619px;width:12px;height:2.2px;background:#fff"></div>
<div class="a" style="left:748.9px;top:614px;width:2.2px;height:12px;background:#fff"></div>
<div class="a" style="left:781px;top:601px;width:160px;height:38px;border:1px solid #858585;border-radius:5px;box-sizing:border-box"></div>
<div class="a" style="left:786px;top:599px;width:73px;height:4px;background:#424242"></div>
<div class="t" style="top:596.41px;font-size:10.5px;color:#bcbcbc;font-weight:700;letter-spacing:-0.145px;left:793.0px;">Item Count 6</div>
<div class="t" style="top:615.70px;font-size:14.3px;color:#f2f2f2;font-weight:400;left:793.0px;-webkit-text-stroke:0.2px #f2f2f2;">0</div>
<div class="a" style="left:970px;top:342px;width:678px;height:309px;border:1.5px solid #ffffff;box-sizing:border-box"></div>
<div class="a" style="left:975px;top:336px;width:80px;height:12px;background:#424242"></div>
<div class="t" style="top:331.12px;font-size:20.3px;color:#ffffff;font-weight:400;letter-spacing:0.013px;left:979.0px;-webkit-text-stroke:0.2px #ffffff;">Stage 2</div>
<div class="a" style="left:1599px;top:336px;width:40px;height:12px;background:#424242"></div>
<svg class="a" style="left:1611px;top:332px;" width="16" height="20" viewBox="0 0 16 20"><rect x="0.9" y="2.5" width="14.2" height="2.4" fill="#f44336"/><path d="M4.5 2.8 Q8 1.4 11.5 2.8Z" fill="#f44336" stroke="#f44336" stroke-width="0.8"/><rect x="3.1" y="6.9" width="9.8" height="11.6" rx="0.8" fill="none" stroke="#f44336" stroke-width="2.2"/></svg>
<div class="a" style="left:979px;top:359px;width:536px;height:38px;border:1px solid #858585;border-radius:5px;box-sizing:border-box"></div>
<div class="a" style="left:984px;top:357px;width:79.2px;height:4px;background:#424242"></div>
<div class="t" style="top:354.41px;font-size:10.5px;color:#bcbcbc;font-weight:700;letter-spacing:-0.090px;left:991.0px;">Game Object *</div>
<div class="t" style="top:373.70px;font-size:14.3px;color:#f2f2f2;font-weight:400;letter-spacing:0.064px;left:991.0px;-webkit-text-stroke:0.2px #f2f2f2;">Assets/Resources/Buildings/House/Stage2.prefab</div>
<div class="a" style="left:1535px;top:360px;width:103px;height:35px;background:#424242;border-radius:4px;box-shadow:0 3px 1px -2px rgba(0,0,0,.2),0 2px 2px 0 rgba(0,0,0,.14),0 1px 5px 0 rgba(0,0,0,.12)"></div>
<div class="t" style="top:369.65px;font-size:14px;color:#f2f2f2;font-weight:700;letter-spacing:-0.347px;left:1586.5px;transform:translateX(-50%);">Choose file</div>
<div class="a" style="left:979px;top:412px;width:660px;height:38px;border:1px solid #858585;border-radius:5px;box-sizing:border-box"></div>
<div class="a" style="left:984px;top:410px;width:76px;height:4px;background:#424242"></div>
<div class="t" style="top:407.41px;font-size:10.5px;color:#bcbcbc;font-weight:700;letter-spacing:-0.288px;left:991.0px;">Time To Build</div>
<div class="t" style="top:426.70px;font-size:14.3px;color:#f2f2f2;font-weight:400;left:991.0px;-webkit-text-stroke:0.2px #f2f2f2;">10</div>
<div class="t" style="top:464.39px;font-size:16.2px;color:#f2f2f2;font-weight:400;letter-spacing:-0.059px;left:979.0px;-webkit-text-stroke:0.2px #f2f2f2;">Items Required</div>
<div class="a" style="left:979px;top:495px;width:160px;height:38px;border:1px solid #858585;border-radius:5px;box-sizing:border-box"></div>
<div class="a" style="left:984px;top:493px;width:40.8px;height:4px;background:#424242"></div>
<div class="t" style="top:490.41px;font-size:10.5px;color:#bcbcbc;font-weight:700;letter-spacing:-0.112px;left:991.0px;">Item 1</div>
<div class="t" style="top:509.70px;font-size:14.3px;color:#f2f2f2;font-weight:400;letter-spacing:0.095px;left:991.0px;-webkit-text-stroke:0.2px #f2f2f2;">Wooden Stick</div>
<div class="a" style="left:1103px;top:502px;width:24px;height:24px;background:#2196f3;border-radius:50%;box-shadow:0 2px 4px rgba(0,0,0,.35)"></div>
<div class="a" style="left:1109px;top:513px;width:12px;height:2.2px;background:#fff"></div>
<div class="a" style="left:1113.9px;top:508px;width:2.2px;height:12px;background:#fff"></div>
<div class="a" style="left:1146px;top:495px;width:160px;height:38px;border:1px solid #858585;border-radius:5px;box-sizing:border-box"></div>
<div class="a" style="left:1151px;top:493px;width:73px;height:4px;background:#424242"></div>
<div class="t" style="top:490.41px;font-size:10.5px;color:#bcbcbc;font-weight:700;letter-spacing:-0.145px;left:1158.0px;">Item Count 1</div>
<div class="t" style="top:509.70px;font-size:14.3px;color:#f2f2f2;font-weight:400;left:1158.0px;-webkit-text-stroke:0.2px #f2f2f2;">15</div>
<div class="a" style="left:1312px;top:495px;width:160px;height:38px;border:1px solid #858585;border-radius:5px;box-sizing:border-box"></div>
<div class="a" style="left:1317px;top:493px;width:40.8px;height:4px;background:#424242"></div>
<div class="t" style="top:490.41px;font-size:10.5px;color:#bcbcbc;font-weight:700;letter-spacing:-0.112px;left:1324.0px;">Item 2</div>
<div class="t" style="top:509.70px;font-size:14.3px;color:#f2f2f2;font-weight:400;letter-spacing:-0.136px;left:1324.0px;-webkit-text-stroke:0.2px #f2f2f2;">Iron Ore</div>
<div class="a" style="left:1436px;top:502px;width:24px;height:24px;background:#2196f3;border-radius:50%;box-shadow:0 2px 4px rgba(0,0,0,.35)"></div>
<div class="a" style="left:1442px;top:513px;width:12px;height:2.2px;background:#fff"></div>
<div class="a" style="left:1446.9px;top:508px;width:2.2px;height:12px;background:#fff"></div>
<div class="a" style="left:1479px;top:495px;width:160px;height:38px;border:1px solid #858585;border-radius:5px;box-sizing:border-box"></div>
<div class="a" style="left:1484px;top:493px;width:73px;height:4px;background:#424242"></div>
<div class="t" style="top:490.41px;font-size:10.5px;color:#bcbcbc;font-weight:700;letter-spacing:-0.145px;left:1491.0px;">Item Count 2</div>
<div class="t" style="top:509.70px;font-size:14.3px;color:#f2f2f2;font-weight:400;left:1491.0px;-webkit-text-stroke:0.2px #f2f2f2;">10</div>
<div class="a" style="left:979px;top:548px;width:160px;height:38px;border:1px solid #858585;border-radius:5px;box-sizing:border-box"></div>
<div class="t" style="top:561.20px;font-size:14.3px;color:#bababa;font-weight:400;left:991.0px;-webkit-text-stroke:0.2px #bababa;">Item 3</div>
<div class="a" style="left:1103px;top:555px;width:24px;height:24px;background:#2196f3;border-radius:50%;box-shadow:0 2px 4px rgba(0,0,0,.35)"></div>
<div class="a" style="left:1109px;top:566px;width:12px;height:2.2px;background:#fff"></div>
<div class="a" style="left:1113.9px;top:561px;width:2.2px;height:12px;background:#fff"></div>
<div class="a" style="left:1146px;top:548px;width:160px;height:38px;border:1px solid #858585;border-radius:5px;box-sizing:border-box"></div>
<div class="a" style="left:1151px;top:546px;width:73px;height:4px;background:#424242"></div>
<div class="t" style="top:543.41px;font-size:10.5px;color:#bcbcbc;font-weight:700;letter-spacing:-0.145px;left:1158.0px;">Item Count 3</div>
<div class="t" style="top:562.70px;font-size:14.3px;color:#f2f2f2;font-weight:400;left:1158.0px;-webkit-text-stroke:0.2px #f2f2f2;">0</div>
<div class="a" style="left:1312px;top:548px;width:160px;height:38px;border:1px solid #858585;border-radius:5px;box-sizing:border-box"></div>
<div class="t" style="top:561.20px;font-size:14.3px;color:#bababa;font-weight:400;left:1324.0px;-webkit-text-stroke:0.2px #bababa;">Item 4</div>
<div class="a" style="left:1436px;top:555px;width:24px;height:24px;background:#2196f3;border-radius:50%;box-shadow:0 2px 4px rgba(0,0,0,.35)"></div>
<div class="a" style="left:1442px;top:566px;width:12px;height:2.2px;background:#fff"></div>
<div class="a" style="left:1446.9px;top:561px;width:2.2px;height:12px;background:#fff"></div>
<div class="a" style="left:1479px;top:548px;width:160px;height:38px;border:1px solid #858585;border-radius:5px;box-sizing:border-box"></div>
<div class="a" style="left:1484px;top:546px;width:73px;height:4px;background:#424242"></div>
<div class="t" style="top:543.41px;font-size:10.5px;color:#bcbcbc;font-weight:700;letter-spacing:-0.145px;left:1491.0px;">Item Count 4</div>
<div class="t" style="top:562.70px;font-size:14.3px;color:#f2f2f2;font-weight:400;left:1491.0px;-webkit-text-stroke:0.2px #f2f2f2;">0</div>
<div class="a" style="left:979px;top:601px;width:160px;height:38px;border:1px solid #858585;border-radius:5px;box-sizing:border-box"></div>
<div class="t" style="top:614.20px;font-size:14.3px;color:#bababa;font-weight:400;left:991.0px;-webkit-text-stroke:0.2px #bababa;">Item 5</div>
<div class="a" style="left:1103px;top:608px;width:24px;height:24px;background:#2196f3;border-radius:50%;box-shadow:0 2px 4px rgba(0,0,0,.35)"></div>
<div class="a" style="left:1109px;top:619px;width:12px;height:2.2px;background:#fff"></div>
<div class="a" style="left:1113.9px;top:614px;width:2.2px;height:12px;background:#fff"></div>
<div class="a" style="left:1146px;top:601px;width:160px;height:38px;border:1px solid #858585;border-radius:5px;box-sizing:border-box"></div>
<div class="a" style="left:1151px;top:599px;width:73px;height:4px;background:#424242"></div>
<div class="t" style="top:596.41px;font-size:10.5px;color:#bcbcbc;font-weight:700;letter-spacing:-0.145px;left:1158.0px;">Item Count 5</div>
<div class="t" style="top:615.70px;font-size:14.3px;color:#f2f2f2;font-weight:400;left:1158.0px;-webkit-text-stroke:0.2px #f2f2f2;">0</div>
<div class="a" style="left:1312px;top:601px;width:160px;height:38px;border:1px solid #858585;border-radius:5px;box-sizing:border-box"></div>
<div class="t" style="top:614.20px;font-size:14.3px;color:#bababa;font-weight:400;left:1324.0px;-webkit-text-stroke:0.2px #bababa;">Item 6</div>
<div class="a" style="left:1436px;top:608px;width:24px;height:24px;background:#2196f3;border-radius:50%;box-shadow:0 2px 4px rgba(0,0,0,.35)"></div>
<div class="a" style="left:1442px;top:619px;width:12px;height:2.2px;background:#fff"></div>
<div class="a" style="left:1446.9px;top:614px;width:2.2px;height:12px;background:#fff"></div>
<div class="a" style="left:1479px;top:601px;width:160px;height:38px;border:1px solid #858585;border-radius:5px;box-sizing:border-box"></div>
<div class="a" style="left:1484px;top:599px;width:73px;height:4px;background:#424242"></div>
<div class="t" style="top:596.41px;font-size:10.5px;color:#bcbcbc;font-weight:700;letter-spacing:-0.145px;left:1491.0px;">Item Count 6</div>
<div class="t" style="top:615.70px;font-size:14.3px;color:#f2f2f2;font-weight:400;left:1491.0px;-webkit-text-stroke:0.2px #f2f2f2;">0</div>
<div class="a" style="left:272px;top:659px;width:120px;height:36px;background:#2196f3;border-radius:4px;box-shadow:0 3px 1px -2px rgba(0,0,0,.2),0 2px 2px 0 rgba(0,0,0,.14),0 1px 5px 0 rgba(0,0,0,.12)"></div>
<div class="t" style="top:670.15px;font-size:14px;color:#ffffff;font-weight:700;letter-spacing:0.096px;left:332.0px;transform:translateX(-50%);">Add Stage</div>
<div class="a" style="left:260px;top:970px;width:1400px;height:1px;background:#d6d6d6;box-shadow:0 -0.5px 0 rgba(214,214,214,.4)"></div>
<div class="a" style="left:1479px;top:987px;width:81px;height:36px;background:#2196f3;border-radius:4px;box-shadow:0 3px 1px -2px rgba(0,0,0,.2),0 2px 2px 0 rgba(0,0,0,.14),0 1px 5px 0 rgba(0,0,0,.12)"></div>
<div class="t" style="top:998.23px;font-size:14.5px;color:#ffffff;font-weight:700;letter-spacing:-0.031px;left:1519.5px;transform:translateX(-50%);">Update</div>
<div class="t" style="top:998.23px;font-size:14.5px;color:#f2f2f2;font-weight:700;letter-spacing:-0.713px;left:1606.0px;transform:translateX(-50%);">Cancel</div>
</body></html>
